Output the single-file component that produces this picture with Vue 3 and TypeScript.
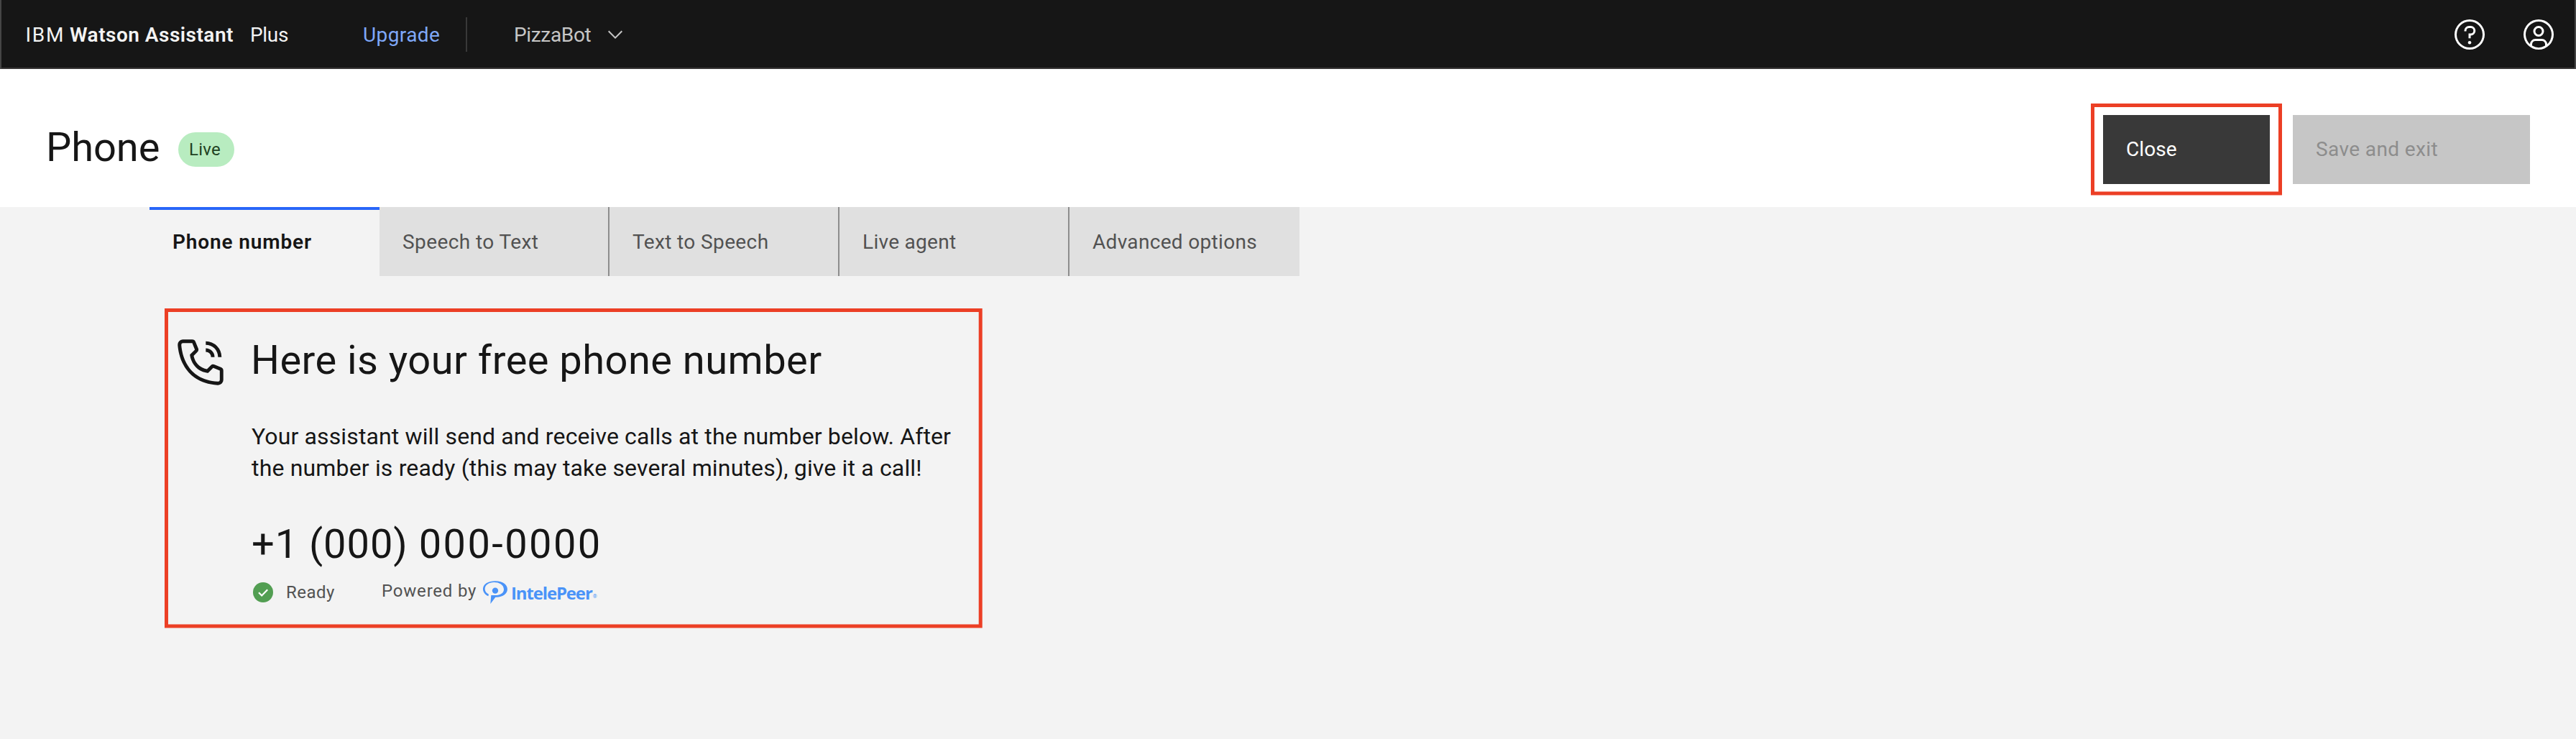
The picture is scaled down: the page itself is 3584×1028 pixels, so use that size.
<script setup lang="ts">
interface Tab {
  label: string
  spacing: number
  active?: boolean
}

const tabs: Tab[] = [
  { label: 'Phone number', spacing: 0.86, active: true },
  { label: 'Speech to Text', spacing: 0.42 },
  { label: 'Text to Speech', spacing: 0.38 },
  { label: 'Live agent', spacing: 0.3 },
  { label: 'Advanced options', spacing: 0.32 },
]
</script>

<template>
  <div class="page">
    <header class="topbar">
      <span class="ibm">IBM</span>
      <span class="product">Watson Assistant</span>
      <span class="plan">Plus</span>
      <a class="upgrade">Upgrade</a>
      <span class="divider"></span>
      <div class="switcher">
        <span class="assistant-name">PizzaBot</span>
        <svg class="chevron" viewBox="0 0 16 16"><path d="M8 11 3 6l.7-.7L8 9.6l4.3-4.3.7.7z" /></svg>
      </div>
      <div class="actions">
        <svg class="action" viewBox="0 0 32 32">
          <path d="M16 2a14 14 0 1 0 14 14A14 14 0 0 0 16 2Zm0 26a12 12 0 1 1 12-12 12 12 0 0 1-12 12Z" />
          <circle cx="16" cy="23.5" r="1.5" />
          <path d="M17 8h-1.500A4.490 4.490 0 0 0 11 12.500V13h2v-.500A2.500 2.500 0 0 1 15.500 10H17a2.500 2.500 0 0 1 0 5h-2v4.500h2V17a4.500 4.500 0 0 0 0-9Z" />
        </svg>
        <svg class="action" viewBox="0 0 32 32">
          <path d="M16 8a5 5 0 1 0 5 5 5 5 0 0 0-5-5Zm0 8a3 3 0 1 1 3-3 3 3 0 0 1-3 3Z" />
          <path d="M16 2a14 14 0 1 0 14 14A14 14 0 0 0 16 2Zm-6 24.377V25a3 3 0 0 1 3-3h6a3 3 0 0 1 3 3v1.377a11.900 11.900 0 0 1-12 0Zm13.993-1.451A5 5 0 0 0 19 20h-6a5 5 0 0 0-4.993 4.926 12 12 0 1 1 15.985 0Z" />
        </svg>
      </div>
    </header>

    <section class="title-row">
      <h1>Phone</h1>
      <span class="tag">Live</span>
      <div class="buttons">
        <div class="highlighted">
          <button class="btn close">Close</button>
          <svg class="mark mark-close"><rect x="2.500" y="2.500" width="261" height="122.500" /></svg>
        </div>
        <button class="btn save" disabled>Save and exit</button>
      </div>
    </section>

    <nav class="tabs">
      <button v-for="tab in tabs" :key="tab.label" class="tab" :class="{ active: tab.active }">
        <span :style="{ letterSpacing: tab.spacing + 'px' }">{{ tab.label }}</span>
      </button>
    </nav>

    <main class="panel">
      <svg class="mark mark-panel"><rect x="2.500" y="2.500" width="1132.700" height="439.500" /></svg>
      <svg class="phone-icon" viewBox="0 0 32 32">
        <path d="M26 29h-.170C6.180 27.870 3.390 11.290 3 6.230A3 3 0 0 1 5.760 3h5.510a2 2 0 0 1 1.860 1.260L14.650 8a2 2 0 0 1-.440 2.160l-2.130 2.150a9.370 9.370 0 0 0 7.580 7.600l2.170-2.150A2 2 0 0 1 24 17.350l3.770 1.510A2 2 0 0 1 29 20.720V26a3 3 0 0 1-3 3ZM6 5a1 1 0 0 0-1 1v.080C5.460 12 8.410 26 25.940 27A1 1 0 0 0 27 26.060V20.720l-3.770-1.510-2.870 2.850L19.880 22C11.180 20.910 10 12.210 10 12.120l-.060-.480 2.840-2.870L11.280 5Z" />
        <path d="M28 13h-2a7 7 0 0 0-7-7V4a9 9 0 0 1 9 9Z" />
        <path d="M24 13h-2a3 3 0 0 0-3-3V8a5 5 0 0 1 5 5Z" />
      </svg>
      <div class="info">
        <h2>Here is your free phone number</h2>
        <p>
          <span class="line-one">Your assistant will send and receive calls at the number below. After</span><br />
          <span class="line-two">the number is ready (this may take several minutes), give it a call!</span>
        </p>
        <div class="number"><span class="prefix">+1 (000) </span>000-0000</div>
        <div class="status">
          <svg class="check" viewBox="0 0 28 28">
            <circle cx="14" cy="14" r="14" fill="#529e52" />
            <path d="m8 14.300 4.200 4.200 8-8.200" fill="none" stroke="#fff" stroke-width="2.200" />
          </svg>
          <span class="ready">Ready</span>
          <span class="powered">Powered by</span>
          <svg class="logo" viewBox="66 54 105 96">
            <path d="M88 118C60 106 60 76 80 64c20-13 60-13 77 3 15 14 14 33-1 45-10 8-25 11-38 10L97 150l3-36h12c24 2 41-8 41-24 0-20-20-30-41-30-22 0-38 12-38 28 0 10 6 18 16 22Z" />
            <circle cx="117" cy="95" r="12.500" />
          </svg>
          <span class="vendor">IntelePeer<span class="reg">®</span></span>
        </div>
      </div>
    </main>
  </div>
</template>

<style>
body {
  margin: 0;
  background: #f3f3f3;
}
</style>

<style scoped>
.page {
  width: 3584px;
  height: 1028px;
  overflow: hidden;
  background: #f3f3f3;
  color: #161616;
  font-family: Roboto, "Open Sans", sans-serif;
  font-size: 28px;
  line-height: 28px;
}

.page * {
  box-sizing: border-box;
}

h1,
h2,
p {
  margin: 0;
  font-weight: 400;
}

button {
  border: 0;
  margin: 0;
  font: inherit;
  text-align: left;
}

.topbar {
  display: flex;
  align-items: flex-start;
  height: 96px;
  padding: 0 0 0 33.5px;
  background: #161616;
  border: solid #454545;
  border-width: 0 2px;
  box-shadow: inset 0 -2px #393737;
  color: #f3f3f3;
  white-space: nowrap;
}

.topbar > span:not(.divider),
.upgrade,
.assistant-name {
  flex: none;
  margin-top: 34.5px;
}

.ibm {
  width: 61.5px;
  letter-spacing: 1.7px;
}

.product {
  width: 251px;
  font-weight: 600;
  letter-spacing: 0.49px;
}

.plan {
  width: 157px;
  letter-spacing: -0.3px;
}

.upgrade {
  width: 143px;
  color: #7fa8f8;
  letter-spacing: 0.4px;
}

.divider {
  width: 2px;
  height: 48px;
  margin-top: 24px;
  background: #393939;
}

.switcher {
  display: flex;
  margin-left: 65px;
  color: #c6c6c6;
}

.assistant-name {
  width: 125px;
  letter-spacing: -0.34px;
}

.chevron {
  width: 32px;
  height: 32px;
  margin-top: 32px;
  fill: #c6c6c6;
}

.actions {
  display: flex;
  gap: 48px;
  margin: 24px 26px 0 auto;
}

.action {
  width: 48px;
  height: 48px;
  fill: #fff;
}

.title-row {
  display: flex;
  align-items: flex-start;
  height: 192px;
  padding: 0 64px;
  background: #fff;
}

h1 {
  width: 184px;
  margin-top: 81px;
  font-size: 56px;
  line-height: 56px;
  letter-spacing: -0.1px;
}

.tag {
  width: 78px;
  height: 48px;
  margin-top: 88px;
  padding: 12px 0 0 15px;
  border-radius: 24px;
  background: #b8ecc0;
  color: #1f4222;
  font-size: 24px;
  line-height: 24px;
  letter-spacing: 0.27px;
}

.buttons {
  display: flex;
  gap: 32px;
  margin: 64px 0 0 auto;
}

.highlighted {
  position: relative;
}

.btn {
  display: block;
  height: 96px;
  padding: 34px 32px;
  line-height: 28px;
}

.close {
  width: 232px;
  background: #393939;
  color: #fff;
  letter-spacing: 0.1px;
}

.save {
  width: 330px;
  background: #c6c6c6;
  color: #8d8d8d;
  letter-spacing: 0.39px;
}

.mark {
  position: absolute;
  fill: none;
  stroke: #ec3f25;
  stroke-width: 5px;
  overflow: visible;
}

.mark-close {
  left: -17.5px;
  top: -16.5px;
  width: 267px;
  height: 128px;
}

.mark-panel {
  left: 228.5px;
  top: 45.3px;
  width: 1138px;
  height: 445px;
}

.tabs {
  display: flex;
  height: 96px;
  padding-left: 208px;
}

.tab {
  width: 320px;
  height: 96px;
  padding: 35px 30px 33px 32px;
  background: #e0e0e0;
  border-right: 2px solid #8d8d8d;
  color: #525252;
  line-height: 28px;
}

.tab:last-child {
  border-right: 0;
}

.tab.active {
  background: #f3f3f3;
  border-right: 0;
  box-shadow: inset 0 4px #2966f9;
  color: #161616;
  font-weight: 600;
}

.panel {
  position: relative;
  display: flex;
  align-items: flex-start;
  padding-left: 240px;
}

.phone-icon {
  flex: none;
  width: 78px;
  height: 78px;
  margin-top: 81px;
  fill: #161616;
}

.info {
  margin: 89px 0 0 32px;
  white-space: nowrap;
}

h2 {
  margin-left: -1px;
  font-size: 56px;
  line-height: 56px;
  letter-spacing: 0.46px;
}

p {
  margin-top: 56px;
  font-size: 32px;
  line-height: 44px;
}

.line-one {
  letter-spacing: 0.13px;
}

.line-two {
  letter-spacing: 0.165px;
}

.number {
  margin-top: 56px;
  font-size: 56px;
  line-height: 56px;
  letter-spacing: 2.4px;
}

.prefix {
  letter-spacing: 0.95px;
}

.status {
  display: flex;
  align-items: flex-start;
  margin: 23px 0 0 2px;
  color: #525252;
  font-size: 24px;
  line-height: 24px;
}

.check {
  width: 28px;
  height: 28px;
  margin-top: 2px;
}

.ready {
  width: 133px;
  margin: 4px 0 0 18px;
  letter-spacing: 0.5px;
}

.powered {
  width: 141px;
  margin-top: 2px;
  letter-spacing: 0.8px;
}

.logo {
  width: 35px;
  height: 32px;
  fill: #4a93f8;
}

.vendor {
  display: flex;
  margin: 5px 0 0 4px;
  color: #4a93f8;
  font-family: "Open Sans", sans-serif;
  font-weight: 700;
  letter-spacing: -1.15px;
}

.reg {
  padding: 5px 0 0 1px;
  font-size: 7px;
  font-weight: 600;
  letter-spacing: 0;
}
</style>
